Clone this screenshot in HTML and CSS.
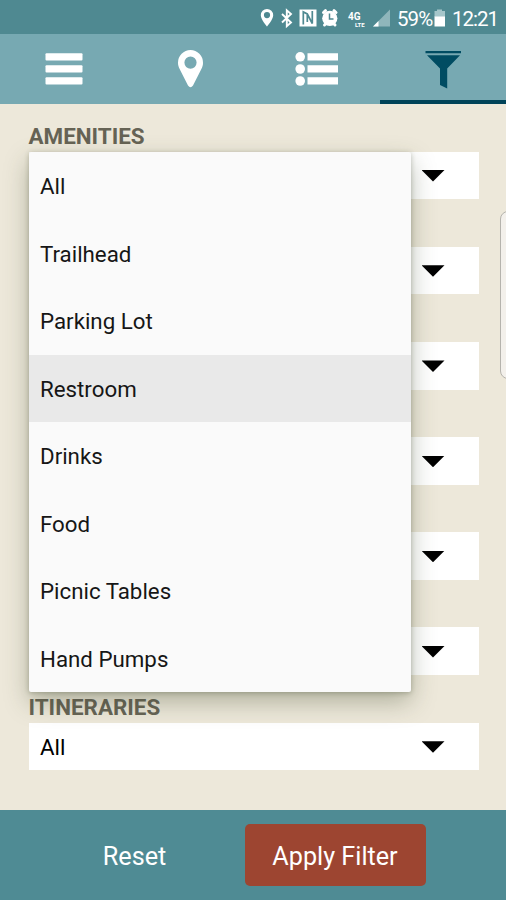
FILE: index.html
```html
<!DOCTYPE html>
<html lang="en">
<head>
<meta charset="utf-8">
<title>Filter</title>
<link rel="stylesheet" href="styles.css">
</head>
<body>
<div class="screen">
  <header class="status">
    <svg class="status-icons" width="140" height="34" viewBox="256 0 140 34">
      <path fill="#fff" fill-rule="evenodd" d="M267 9a6.2 6.2 0 0 0-6.2 6.3c0 4.400 6.200 11.200 6.200 11.200s6.200-6.800 6.200-11.200A6.200 6.200 0 0 0 267 9zm0 3a3.100 3.100 0 1 1 0 6.200a3.100 3.100 0 0 1 0-6.200z"/>
      <path fill="none" stroke="#fff" stroke-width="1.900" d="M282 14l9 8.500-4.200 3.700V10.300L291 14l-9 8.500"/>
      <path fill="#fff" d="M299.500 9.500h17v17h-17z"/>
      <path fill="none" stroke="#4f8991" stroke-width="1.700" d="M303.300 24.500V12l4 2 5 9.500V11M307.300 14v8"/>
      <circle cx="329.800" cy="18.300" r="7.600" fill="#fff"/>
      <path stroke="#fff" stroke-width="3" stroke-linecap="round" d="M323.500 12.500l2-1.800M336 12.500l-2-1.800M324.500 25l1-1M335 25l-1-1"/>
      <path fill="none" stroke="#4f8991" stroke-width="1.500" d="M329.500 13.500V19h4"/>
      <text class="net" x="348" y="20">4G</text>
      <text class="lte" x="355" y="27">LTE</text>
      <path fill="#8fb6bb" d="M390 9.500v17h-17z"/>
      <path fill="#fff" d="M378.500 21v5.500H373z"/>
    </svg>
    <span class="percent">59%</span>
    <svg class="battery" width="12" height="34" viewBox="0 0 12 34">
      <path fill="#a5c6ca" d="M3 9.500h5v1.500h3v6H.500v-6H3z"/><path fill="#fff" d="M.500 16.500H11V26.500H.500z"/>
    </svg>
    <span class="clock">12:21</span>
  </header>
  <nav class="tabs">
    <a class="tab"><svg width="50" height="46" viewBox="38 46 50 46"><g fill="#fff"><rect x="45.500" y="53.300" width="37" height="7.200" rx="1"/><rect x="45.500" y="65.300" width="37" height="7.200" rx="1"/><rect x="45.500" y="77.300" width="37" height="7.200" rx="1"/></g></svg></a>
    <a class="tab"><svg width="50" height="46" viewBox="165 46 50 46"><path fill="#fff" fill-rule="evenodd" d="M190.500 50a12.600 12.600 0 0 0-12.500 12.700c0 2.300.500 4 1.500 6l8.500 16.800q2.500 3.500 5 0l8.500-16.800c1-2 1.500-3.700 1.500-6A12.600 12.600 0 0 0 190.500 50zm0 6.500a6.100 6.100 0 1 1 0 12.200a6.100 6.100 0 0 1 0-12.200z"/></svg></a>
    <a class="tab"><svg width="50" height="46" viewBox="291 46 50 46"><g fill="#fff"><circle cx="300.200" cy="56.800" r="4.800"/><circle cx="300.200" cy="69" r="4.800"/><circle cx="300.200" cy="81" r="4.800"/><path d="M307.500 53.300h30.500v7.200h-30.500zM307.500 65.300h30.500v7.200h-30.500zM307.500 77.300h30.500v7.200h-30.500z"/></g></svg></a>
    <a class="tab active"><svg width="50" height="46" viewBox="418 46 50 46"><path fill="#004c62" d="M425.500 51h35.500v2.300h-35.500zM427 55.300h33L447.200 68.500v20l-7.200-3.500V68.500z"/></svg></a>
  </nav>
  <main class="content">
    <section class="field"><h2 class="label">AMENITIES</h2><div class="select"><i class="arrow"></i></div></section>
    <section class="field"><div class="select"><i class="arrow"></i></div></section>
    <section class="field"><div class="select"><i class="arrow"></i></div></section>
    <section class="field"><div class="select"><i class="arrow"></i></div></section>
    <section class="field"><div class="select"><i class="arrow"></i></div></section>
    <section class="field"><div class="select"><i class="arrow"></i></div></section>
    <section class="field"><h2 class="label">ITINERARIES</h2><div class="select"><span>All</span><i class="arrow"></i></div></section>
    <ul class="menu">
      <li>All</li>
      <li>Trailhead</li>
      <li>Parking Lot</li>
      <li class="selected">Restroom</li>
      <li>Drinks</li>
      <li>Food</li>
      <li>Picnic Tables</li>
      <li>Hand Pumps</li>
    </ul>
    <div class="edge-handle"></div>
  </main>
  <footer class="actions">
    <button class="reset">Reset</button>
    <button class="apply">Apply Filter</button>
  </footer>
</div>
</body>
</html>
```
FILE: styles.css
```css
* { box-sizing: border-box; }
body { margin: 0; font-family: Roboto, "Liberation Sans", sans-serif; }
.screen { display: flex; flex-direction: column; width: 506px; height: 900px; overflow: hidden; background: #ede8da; }

.status { display: flex; align-items: center; height: 34px; padding-left: 256px; background: #4f8991; color: #fff; font-size: 20.5px; line-height: 34px; }
.status > * { flex: none; }
.net { font-size: 10px; font-weight: 700; fill: #fff; }
.lte { font-size: 6px; font-weight: 700; fill: #fff; }
.percent { width: 38px; padding: 3px 0 0 1px; letter-spacing: -.9px; }
.battery { margin-right: 6px; }
.clock { padding-top: 3px; letter-spacing: -1px; }

.tabs { display: grid; grid-template-columns: repeat(4, 1fr); height: 70px; background: #77a9b2; }
.tab { display: flex; justify-content: center; padding-top: 12px; border-bottom: 4px solid transparent; }
.tab.active { border-color: #004358; }
.tab svg { flex: none; }

.content { position: relative; flex: none; height: 706px; padding: 0 27.500px 0 28.500px; }
.field { display: flex; flex-direction: column; justify-content: flex-end; height: 95.200px; }
.label { margin: 0; font-size: 22.400px; line-height: 29.500px; font-weight: 700; color: #666355; }
.select { display: flex; flex: none; align-items: center; justify-content: space-between; height: 47.700px; padding: 1px 34px 0 11.500px; background: #fff; font-size: 22.300px; }
.select .arrow:only-child { margin-left: auto; }
.arrow { width: 23px; height: 11.500px; background: #000; clip-path: polygon(0 0, 100% 0, 50% 100%); }

.menu { position: absolute; left: 28.500px; top: 48px; width: 382.500px; margin: 0; padding: 0; list-style: none; background: #fafafa; border-radius: 2px; box-shadow: 0 10px 24px rgba(60, 70, 40, .34), 0 1px 5px rgba(60, 70, 40, .3); }
.menu li { height: 67.500px; padding-left: 11.500px; font-size: 22.300px; line-height: 68px; color: #161616; }
.menu .selected { background: #e9e9e9; }
.edge-handle { position: absolute; left: 500px; top: 107px; width: 20px; height: 168px; border: 1px solid #b5b3ad; border-radius: 8px; background: #f3f0eb; }

.actions { display: flex; align-items: center; height: 90px; background: #4f8b94; }
button { border: 0; padding: 2px 0 0; font: 25.200px Roboto, "Liberation Sans", sans-serif; color: #fff; background: none; }
.reset { width: 180px; margin-left: 44.500px; }
.apply { width: 181px; height: 62px; margin-left: 20px; border-radius: 5px; background: #9d4531; }
```
